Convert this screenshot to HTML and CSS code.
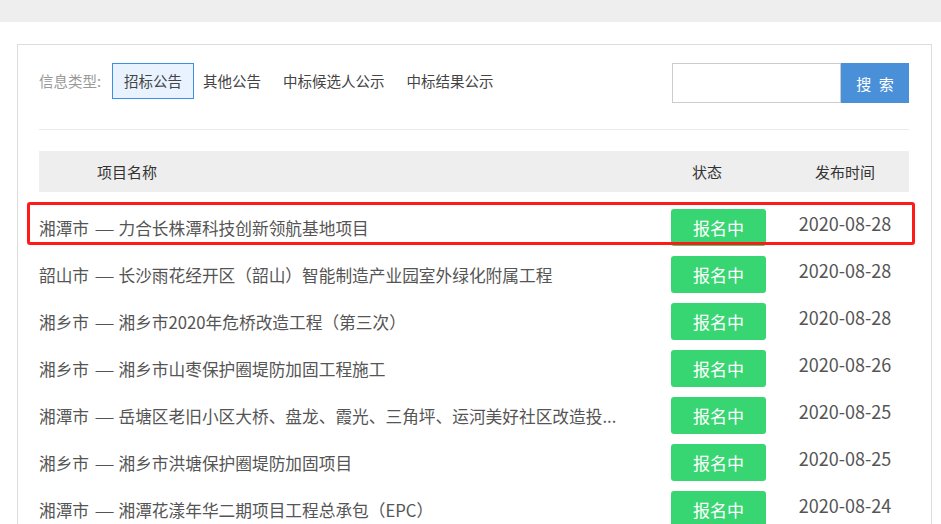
FILE: index.html
```html
<!DOCTYPE html>
<html lang="zh-CN">
<head>
    <meta charset="UTF-8">
    <meta name="viewport" content="width=device-width, initial-scale=1.0">
    <title>招标公告</title>
    <link rel="stylesheet" href="styles.css">
</head>
<body>
    <div class="topbar"></div>

    <div class="panel">
        <div class="filter">
            <span class="filter-label">信息类型:</span>
            <a class="tab active">招标公告</a>
            <a class="tab">其他公告</a>
            <a class="tab">中标候选人公示</a>
            <a class="tab">中标结果公示</a>
            <div class="search">
                <input type="text" class="search-input">
                <button class="search-btn">搜 索</button>
            </div>
        </div>

        <div class="list-head">
            <span class="col-name">项目名称</span>
            <span class="col-status">状态</span>
            <span class="col-date">发布时间</span>
        </div>

        <ul class="list">
            <li class="row highlight">
                <span class="title">湘潭市 <span class="dash">—</span> 力合长株潭科技创新领航基地项目</span>
                <span class="status"><span class="badge">报名中</span></span>
                <span class="date">2020-08-28</span>
            </li>
            <li class="row">
                <span class="title">韶山市 <span class="dash">—</span> 长沙雨花经开区（韶山）智能制造产业园室外绿化附属工程</span>
                <span class="status"><span class="badge">报名中</span></span>
                <span class="date">2020-08-28</span>
            </li>
            <li class="row">
                <span class="title">湘乡市 <span class="dash">—</span> 湘乡市2020年危桥改造工程（第三次）</span>
                <span class="status"><span class="badge">报名中</span></span>
                <span class="date">2020-08-28</span>
            </li>
            <li class="row">
                <span class="title">湘乡市 <span class="dash">—</span> 湘乡市山枣保护圈堤防加固工程施工</span>
                <span class="status"><span class="badge">报名中</span></span>
                <span class="date">2020-08-26</span>
            </li>
            <li class="row">
                <span class="title">湘潭市 <span class="dash">—</span> 岳塘区老旧小区大桥、盘龙、霞光、三角坪、运河美好社区改造投...</span>
                <span class="status"><span class="badge">报名中</span></span>
                <span class="date">2020-08-25</span>
            </li>
            <li class="row">
                <span class="title">湘乡市 <span class="dash">—</span> 湘乡市洪塘保护圈堤防加固项目</span>
                <span class="status"><span class="badge">报名中</span></span>
                <span class="date">2020-08-25</span>
            </li>
            <li class="row">
                <span class="title">湘潭市 <span class="dash">—</span> 湘潭花漾年华二期项目工程总承包（EPC）</span>
                <span class="status"><span class="badge">报名中</span></span>
                <span class="date">2020-08-24</span>
            </li>
        </ul>
    </div>
</body>
</html>
```

FILE: styles.css
```css
body {
    margin: 0;
    background-color: #fff;
    font-family: "Noto Sans CJK SC", "Microsoft YaHei", sans-serif;
    color: #555;
}
.topbar {
    height: 22px;
    background-color: #eee;
}
.panel {
    box-sizing: border-box;
    width: 915px;
    margin: 22px 0 0 17px;
    padding: 18px 22px 0 21px;
    border: 1px solid #ddd;
    border-bottom: none;
}

/* filtre */
.filter {
    display: flex;
    align-items: flex-start;
    padding-bottom: 26px;
    border-bottom: 1px solid #eaeaea;
    font-size: 14.5px;
}
.filter-label {
    line-height: 36px;
    color: #999;
    margin-right: 11px;
}
.tab {
    display: block;
    height: 34px;
    line-height: 34px;
    padding: 0 10px;
    border: 1px solid transparent;
    color: #444;
    cursor: pointer;
}
.tab.active {
    padding: 0 11px;
    margin-right: -2px;
    border-color: #3d8fe0;
    background-color: #e8f3ff;
}
.search {
    display: flex;
    margin-left: auto;
}
.search-input {
    box-sizing: border-box;
    width: 169px;
    height: 40px;
    border: 1px solid #ccc;
    outline: none;
}
.search-btn {
    width: 68px;
    height: 40px;
    border: none;
    background-color: #4a90d9;
    color: #fff;
    font-family: inherit;
    font-size: 15px;
    letter-spacing: 2px;
    padding: 0 0 0 2px;
}

/* liste */
.list-head {
    display: grid;
    grid-template-columns: 1fr 110px 128px;
    align-items: center;
    height: 41px;
    margin-top: 21px;
    background-color: #eee;
    font-size: 15px;
    color: #333;
}
.col-name {
    padding-left: 58px;
}
.col-status {
    padding-left: 21px;
}
.col-date {
    text-align: center;
}
.list {
    list-style: none;
    margin: 12px 0 0;
    padding: 0;
}
.row {
    position: relative;
    display: grid;
    grid-template-columns: 1fr 110px 128px;
    align-items: center;
    height: 47px;
}
.title {
    font-size: 16.7px;
    line-height: 24px;
    padding-right: 30px;
    white-space: nowrap;
    overflow: hidden;
    text-overflow: ellipsis;
}
.dash {
    display: inline-block;
    margin: 0 3px 0 4px;
    transform: scaleX(1.35);
}
.badge {
    display: block;
    width: 95px;
    height: 37px;
    line-height: 37px;
    border-radius: 3px;
    background-color: #38d672;
    color: #fff;
    font-size: 17px;
    text-align: center;
}
.date {
    font-size: 18px;
    line-height: 24px;
    text-align: center;
    margin-top: -10px;
    color: #555;
}
.highlight::after {
    content: "";
    position: absolute;
    left: -12px;
    right: -6px;
    top: -2px;
    bottom: 6px;
    border: 3px solid #ff1a1a;
    border-radius: 3px;
    pointer-events: none;
}
```
